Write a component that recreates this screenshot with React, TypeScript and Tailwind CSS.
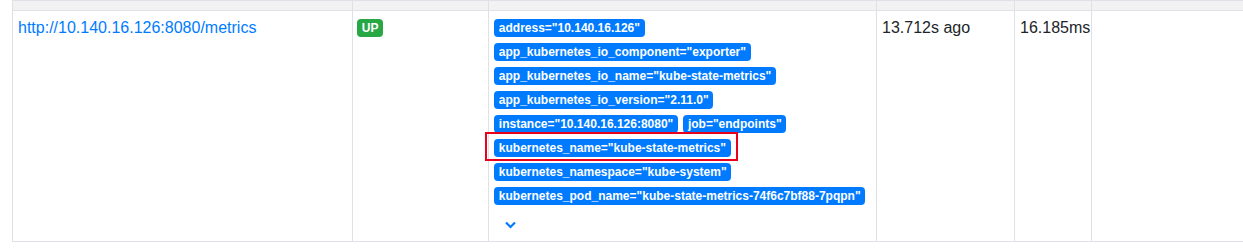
import React from "react";

const rows: string[][] = [
  ['address="10.140.16.126"'],
  ['app_kubernetes_io_component="exporter"'],
  ['app_kubernetes_io_name="kube-state-metrics"'],
  ['app_kubernetes_io_version="2.11.0"'],
  ['instance="10.140.16.126:8080"', 'job="endpoints"'],
  ['kubernetes_name="kube-state-metrics"'],
  ['kubernetes_namespace="kube-system"'],
  ['kubernetes_pod_name="kube-state-metrics-74f6c7bf88-7pqpn"'],
];

function Badge({ text, highlight }: { text: string; highlight?: boolean }) {
  return (
    <span className="relative inline-block h-[18px] rounded-[4px] bg-[#007bff] px-[4.8px] text-[12px] font-bold leading-[18px] text-white whitespace-nowrap">
      {text}
      {highlight && (
        <span className="pointer-events-none absolute -left-[9px] -right-[7px] -top-[7px] -bottom-[4px] border-2 border-[#e8001c]" />
      )}
    </span>
  );
}

export default function App() {
  return (
    <div
      className="w-[1243px] h-[252px] overflow-hidden bg-white text-[#212529]"
      style={{ fontFamily: '"Liberation Sans", Arial, sans-serif' }}
    >
      <table className="ml-[12px] w-[1250px] table-fixed border-collapse text-[16px] leading-[24px]">
        <colgroup>
          <col className="w-[340px]" />
          <col className="w-[136px]" />
          <col className="w-[388px]" />
          <col className="w-[138px]" />
          <col className="w-[77px]" />
          <col />
        </colgroup>
        <tbody>
          <tr className="h-[10px] bg-[#f2f2f2]">
            <td className="border border-[#dee2e6] p-0" />
            <td className="border border-[#dee2e6] p-0" />
            <td className="border border-[#dee2e6] p-0" />
            <td className="border border-[#dee2e6] p-0" />
            <td className="border border-[#dee2e6] p-0" />
            <td className="border border-[#dee2e6] p-0" />
          </tr>
          <tr className="align-top">
            <td className="border border-[#dee2e6] px-[5px] pt-[5px]">
              <a className="text-[#007bff]">http://10.140.16.126:8080/metrics</a>
            </td>
            <td className="border border-[#dee2e6] px-[4px] pt-[5px]">
              <div className="flex pt-[3px]">
                <span className="block h-[18px] rounded-[4px] bg-[#28a745] px-[4.8px] text-[12px] font-bold leading-[18px] text-white">
                  UP
                </span>
              </div>
            </td>
            <td className="border border-[#dee2e6] px-[5px] pt-[5px] pb-[12px]">
              <div className="flex flex-col gap-y-[6px] pt-[3px]">
                {rows.map((r, i) => (
                  <div key={i} className="flex gap-x-[5px]">
                    {r.map((t) => (
                      <Badge key={t} text={t} highlight={t.startsWith("kubernetes_name=")} />
                    ))}
                  </div>
                ))}
              </div>
              <div className="mt-[16px] ml-[11px] h-[8px] leading-none">
                <svg width="11" height="8" viewBox="0 0 11 8" className="block">
                  <polyline
                    points="1,1.5 5.5,6 10,1.5"
                    fill="none"
                    stroke="#007bff"
                    strokeWidth="2.2"
                  />
                </svg>
              </div>
            </td>
            <td className="border border-[#dee2e6] px-[5px] pt-[5px]">13.712s ago</td>
            <td className="border border-[#dee2e6] px-[5px] pt-[5px]">16.185ms</td>
            <td className="border border-[#dee2e6] px-[5px] pt-[5px]" />
          </tr>
        </tbody>
      </table>
    </div>
  );
}
